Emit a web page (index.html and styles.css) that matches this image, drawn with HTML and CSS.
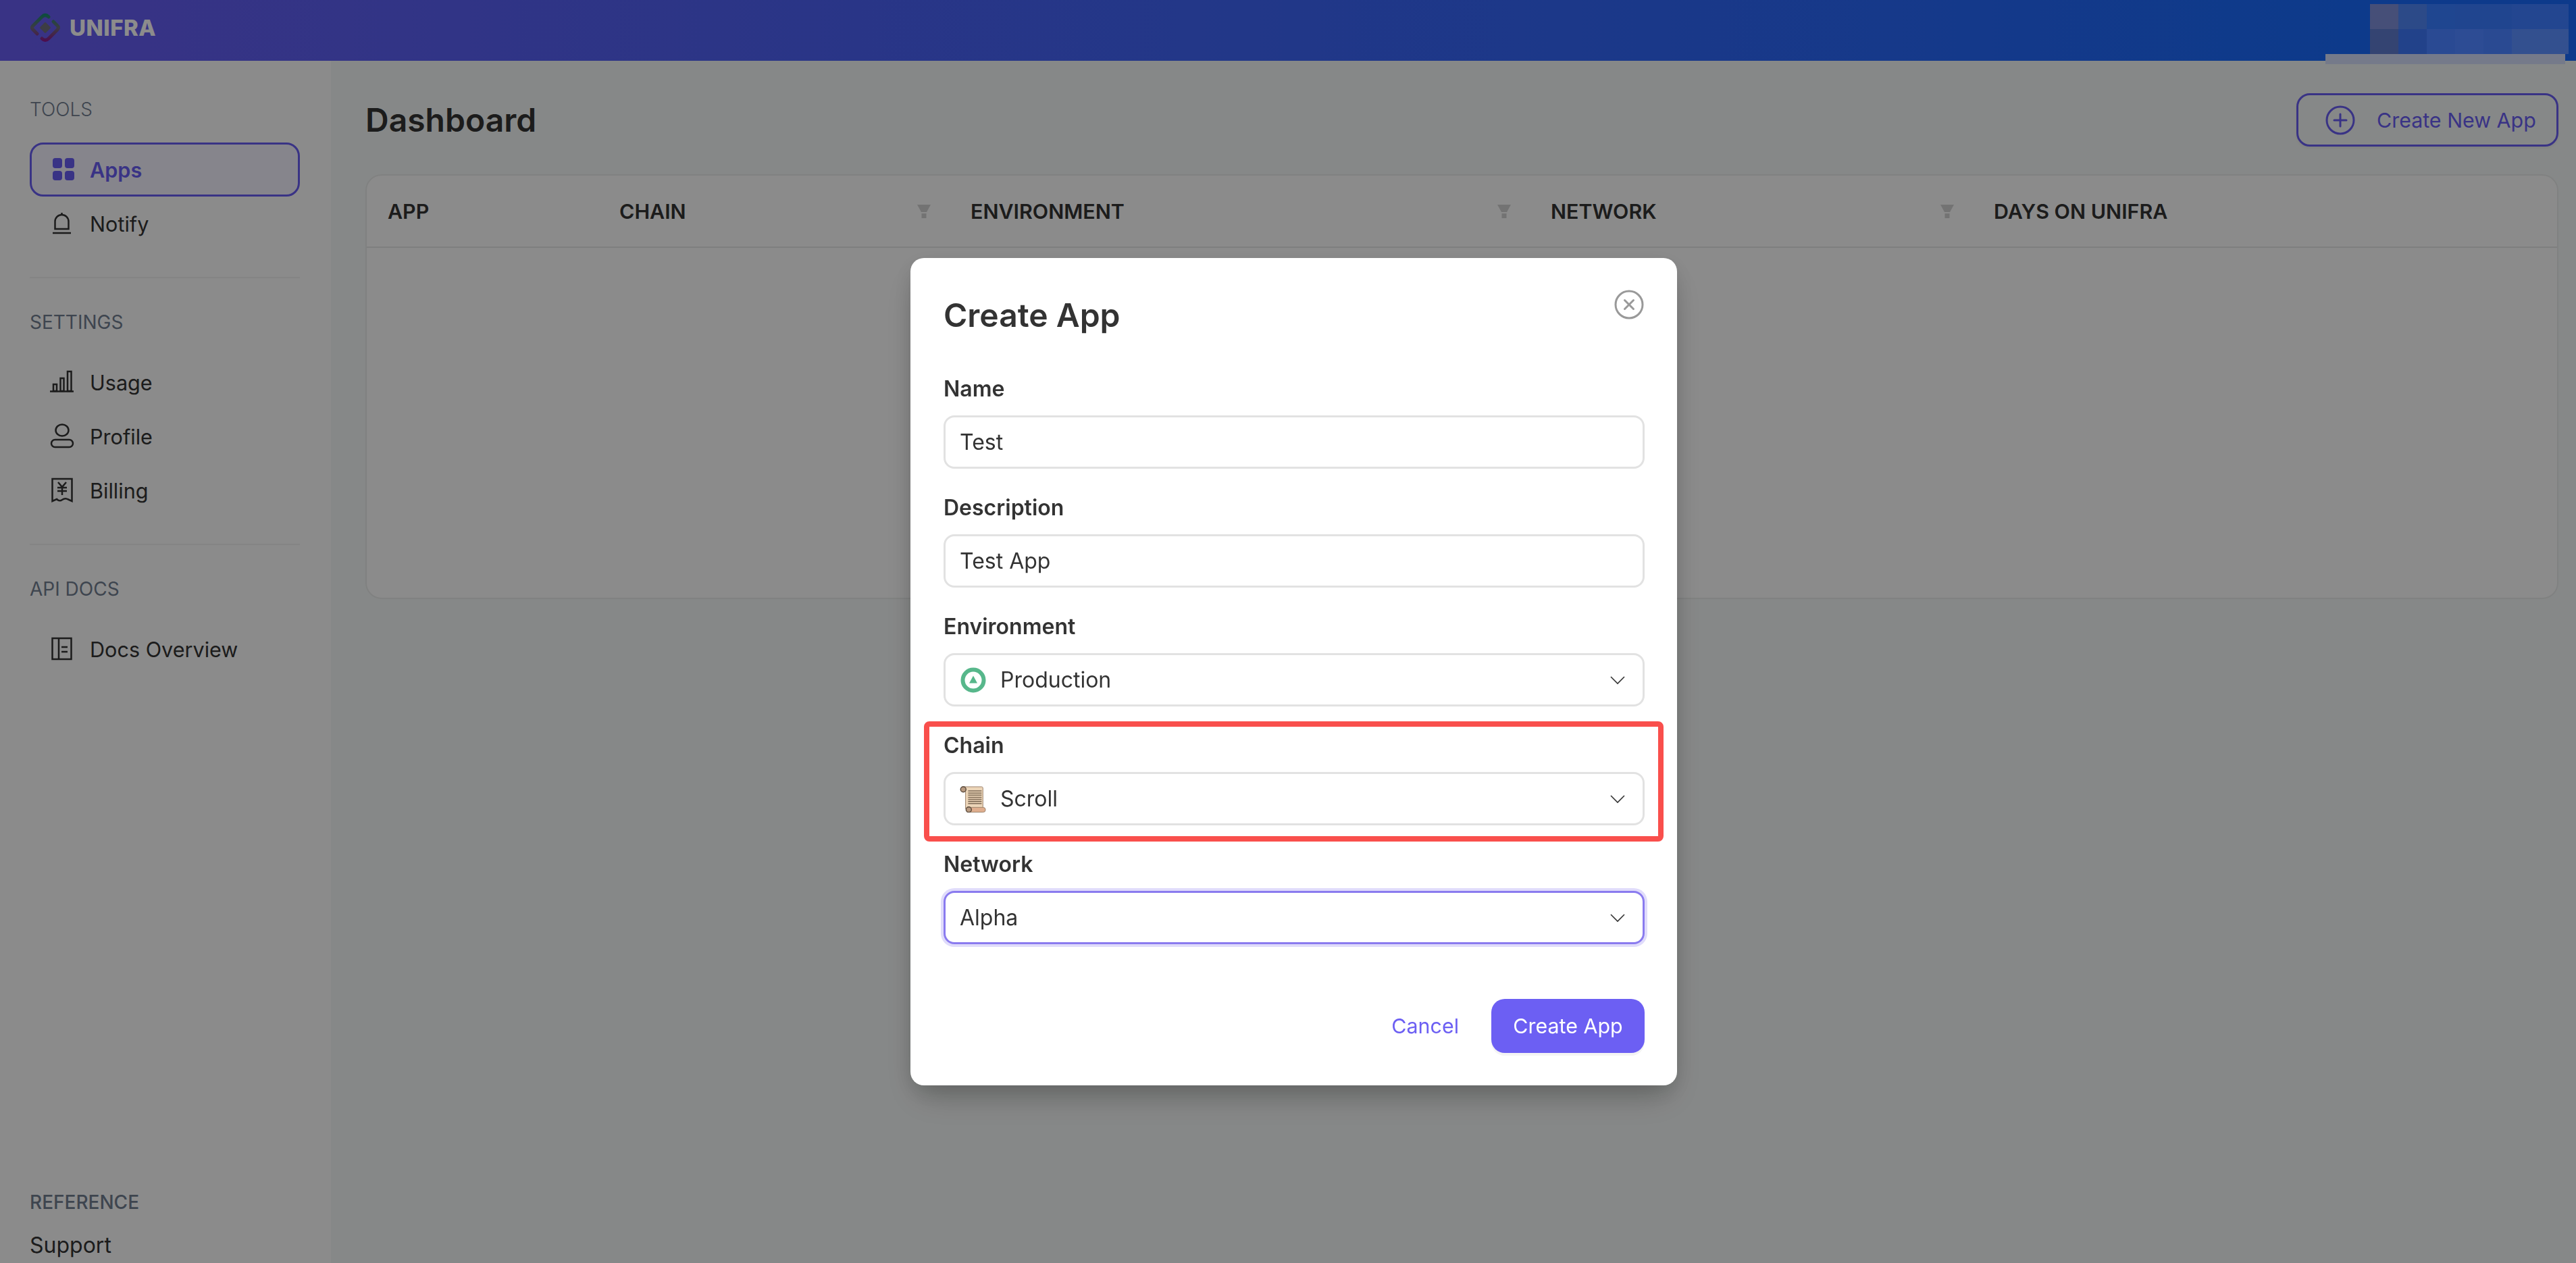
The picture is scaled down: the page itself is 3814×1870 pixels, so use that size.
FILE: index.html
```html
<!DOCTYPE html>
<html>
	<head>
		<meta charset="UTF-8">
		<title>Unifra Dashboard</title>
		<link rel="stylesheet" href="styles.css">
	</head>
	<body>
		<header class="topbar">
			<svg class="logo" viewBox="0 0 44 44" fill="none">
				<defs>
					<linearGradient id="logoFade" gradientUnits="userSpaceOnUse" x1="0" y1="0" x2="0" y2="44">
						<stop offset="0" stop-color="#0f8f6e"/>
						<stop offset="0.5" stop-color="#6d6d7c"/>
						<stop offset="1" stop-color="#8f0f90"/>
					</linearGradient>
				</defs>
				<path d="M27 6Q22 1 17 6L4 19Q1 22 4 25L10 31" stroke="url(#logoFade)" stroke-width="5" stroke-linecap="round"/>
				<path d="M17 38Q22 43 27 38L40 25Q43 22 40 19L34 13" stroke="url(#logoFade)" stroke-width="5" stroke-linecap="round"/>
				<path d="M22 15L29 22L22 29L15 22Z" fill="#6f6f7f" stroke="#6f6f7f" stroke-width="2" stroke-linejoin="round"/>
			</svg>
			<span class="brand">UNIFRA</span>
		</header>
		<div class="layout">
			<nav class="sidebar">
				<section class="nav-group nav-tools">
					<h3 class="nav-title nav-title-light">TOOLS</h3>
					<a class="nav-item active">
						<svg class="nav-icon" viewBox="0 0 40 40">
							<rect x="6" y="3" width="14" height="15" rx="4" fill="currentColor"/>
							<rect x="24" y="3" width="14" height="15" rx="4" fill="currentColor"/>
							<rect x="6" y="22" width="14" height="14" rx="4" fill="currentColor"/>
							<rect x="24" y="22" width="14" height="14" rx="4" fill="currentColor"/>
						</svg>
						Apps
					</a>
					<a class="nav-item">
						<svg class="nav-icon line" viewBox="0 0 40 40">
							<path d="M9.500 28V17a10 10 0 0 1 20 0V28Z"/>
							<path d="M19.500 7V4M6 34H33"/>
						</svg>
						Notify
					</a>
				</section>
				<section class="nav-group">
					<h3 class="nav-title">SETTINGS</h3>
					<a class="nav-item">
						<svg class="nav-icon line" viewBox="0 0 40 40">
							<path d="M2 33.500H37"/>
							<rect x="7" y="23" width="5" height="10"/>
							<rect x="17.500" y="14" width="5" height="19"/>
							<rect x="28" y="4" width="5.500" height="29"/>
						</svg>
						Usage
					</a>
					<a class="nav-item">
						<svg class="nav-icon line" viewBox="0 0 40 40">
							<ellipse cx="20" cy="11" rx="9.500" ry="8.500"/>
							<rect x="4" y="25" width="32" height="11" rx="5.500"/>
						</svg>
						Profile
					</a>
					<a class="nav-item">
						<svg class="nav-icon line" viewBox="0 0 40 40">
							<path d="M5.500 3H34.500V36L28 33Q24 31 20 34Q16 37 12 33L5.500 36Z"/>
							<path d="M14 8L20 15L26 8M13 16H27M13 21H27M20 15V27"/>
						</svg>
						Billing
					</a>
				</section>
				<section class="nav-group">
					<h3 class="nav-title">API DOCS</h3>
					<a class="nav-item">
						<svg class="nav-icon line" viewBox="0 0 40 40">
							<rect x="5.500" y="4" width="28" height="31"/>
							<path d="M15 4V35M19 17H28M19 24H28"/>
						</svg>
						Docs Overview
					</a>
				</section>
				<section class="nav-bottom">
					<h3 class="nav-title nav-title-strong">REFERENCE</h3>
					<a class="nav-link">Support</a>
				</section>
			</nav>
			<main class="content">
				<div class="content-head">
					<h1 class="page-title">Dashboard</h1>
					<button class="new-app">
						<svg class="new-app-icon" viewBox="0 0 44 44" fill="none" stroke="currentColor" stroke-width="3">
							<circle cx="22" cy="22" r="20"/>
							<path d="M22 13V31M13 22H31" stroke-linecap="round"/>
						</svg>
						Create New App
					</button>
				</div>
				<div class="apps-table">
					<div class="table-head">
						<div class="col col-app">APP</div>
						<div class="col col-chain">CHAIN
							<svg class="filter" viewBox="0 0 24 24"><path d="M2 2H22L16 13H8Z"/><rect x="8.500" y="15" width="7" height="7"/></svg>
						</div>
						<div class="col col-env">ENVIRONMENT
							<svg class="filter" viewBox="0 0 24 24"><path d="M2 2H22L16 13H8Z"/><rect x="8.500" y="15" width="7" height="7"/></svg>
						</div>
						<div class="col col-net">NETWORK
							<svg class="filter" viewBox="0 0 24 24"><path d="M2 2H22L16 13H8Z"/><rect x="8.500" y="15" width="7" height="7"/></svg>
						</div>
						<div class="col col-days">DAYS ON UNIFRA</div>
					</div>
				</div>
			</main>
		</div>
		<div class="overlay">
			<form class="modal">
				<svg class="close" viewBox="0 0 44 44" fill="none" stroke="#999" stroke-width="3">
					<circle cx="22" cy="22" r="20"/>
					<path d="M15.500 15.500L28.500 28.500M28.500 15.500L15.500 28.500" stroke-linecap="round"/>
				</svg>
				<h2 class="modal-title">Create App</h2>
				<div class="field">
					<label class="field-label">Name</label>
					<input class="control" type="text" value="Test">
				</div>
				<div class="field">
					<label class="field-label">Description</label>
					<input class="control" type="text" value="Test App">
				</div>
				<div class="field">
					<label class="field-label">Environment</label>
					<div class="control select">
						<svg class="opt-icon" viewBox="0 0 40 40">
							<circle cx="20" cy="20" r="15.500" fill="none" stroke="#57b78b" stroke-width="6"/>
							<path d="M20 13.500L26 24.500H14Z" fill="#57b78b"/>
						</svg>
						Production
						<svg class="chevron" viewBox="0 0 24 14"><path d="M2 2L12 12L22 2"/></svg>
					</div>
				</div>
				<div class="field field-marked">
					<label class="field-label">Chain</label>
					<div class="control select">
						<svg class="opt-icon" viewBox="0 0 40 42">
							<path d="M5 2H33Q35 2 35 4V36H8V6Z" fill="#ecd5b8" stroke="#9a8068" stroke-width="1"/>
							<circle cx="4.500" cy="6" r="4.200" fill="#b89a80" stroke="#5a4a3c" stroke-width="1.500"/>
							<path d="M12 8.500H33M12 11.800H33M12 15H33M12 18.300H33M12 21.500H33M12 24.800H33M12 28H33" stroke="#7d6a55" stroke-width="1.600"/>
							<rect x="10" y="34" width="29" height="7.500" rx="3.700" fill="#dfae8e" stroke="#9a8068" stroke-width="1"/>
							<circle cx="13" cy="37.500" r="4.200" fill="#b89a80" stroke="#5a4a3c" stroke-width="1.500"/>
						</svg>
						Scroll
						<svg class="chevron" viewBox="0 0 24 14"><path d="M2 2L12 12L22 2"/></svg>
					</div>
				</div>
				<div class="field">
					<label class="field-label">Network</label>
					<div class="control select focused">
						Alpha
						<svg class="chevron" viewBox="0 0 24 14"><path d="M2 2L12 12L22 2"/></svg>
					</div>
				</div>
				<div class="modal-actions">
					<a class="cancel">Cancel</a>
					<button class="submit" type="button">Create App</button>
				</div>
			</form>
		</div>
		<div class="mosaic">
			<div class="mosaic-grid">
				<i></i><i></i><i></i><i></i><i></i><i></i><i></i>
				<i></i><i></i><i></i><i></i><i></i><i></i><i></i>
			</div>
			<div class="mosaic-strip"></div>
		</div>
	</body>
</html>
```

FILE: styles.css
```css
* {
	box-sizing: border-box;
}
html, body {
	height: 100%;
}
body {
	margin: 0;
	overflow: hidden;
	background: #f5f8f7;
	color: #333;
	font-family: Inter, "Noto Sans", sans-serif;
	font-size: 32px;
}
h1, h2, h3 {
	margin: 0;
}

/* top bar */
.topbar {
	display: flex;
	align-items: center;
	height: 90px;
	padding: 0 0 8px 45px;
	background: linear-gradient(90deg, #695df2, #186bfd 92%);
}
.logo {
	width: 44px;
	height: 44px;
}
.brand {
	margin-left: 14px;
	color: #fff;
	font-size: 33px;
	font-weight: 800;
	letter-spacing: 0.5px;
}

.layout {
	display: flex;
	height: 1780px;
}

/* sidebar */
.sidebar {
	display: flex;
	flex-direction: column;
	width: 490px;
	padding: 0 46px 0 44px;
	background: #fdfdfd;
}
.nav-group {
	padding: 43px 0 39px;
	border-bottom: 2px solid #f0f0f0;
}
.nav-group:nth-child(3) {
	border-bottom: 0;
}
.nav-tools {
	padding-top: 50px;
}
.nav-title {
	height: 44px;
	margin-bottom: 27px;
	color: #727e91;
	font-size: 28px;
	font-weight: 400;
	line-height: 44px;
}
.nav-title-light {
	font-weight: 300;
}
.nav-title-strong {
	font-weight: 500;
	margin-bottom: 22px;
}
.nav-item {
	display: flex;
	align-items: center;
	gap: 21px;
	height: 80px;
	padding-left: 26px;
	border: 2px solid transparent;
	border-radius: 20px;
	font-size: 30.600px;
}
.nav-item.active {
	color: #695df2;
	font-weight: 600;
	background: #f5f2ff;
	border: 3px solid #695df2;
	padding-left: 25px;
}
.nav-icon {
	flex: none;
	width: 40px;
	height: 40px;
}
.line {
	fill: none;
	stroke: currentColor;
	stroke-width: 2.500;
}
.nav-bottom {
	margin-top: auto;
	padding-bottom: 6px;
}
.nav-link {
	display: block;
	line-height: 40px;
}

/* main */
.content {
	flex: 1;
	min-width: 0;
	padding: 48px 26px 0 51px;
}
.content-head {
	display: flex;
	align-items: center;
	justify-content: space-between;
	height: 79px;
	margin-bottom: 41px;
}
.page-title {
	font-size: 48px;
	font-weight: 600;
	color: #333;
}
.new-app {
	display: flex;
	align-items: center;
	width: 388px;
	height: 79px;
	padding: 0 0 0 40px;
	gap: 32px;
	background: transparent;
	border: 3px solid #695df2;
	border-radius: 20px;
	color: #695df2;
	font: 400 30.400px Inter, sans-serif;
	box-shadow: 0 2px 4px rgba(0, 0, 0, 0.06);
}
.new-app-icon {
	flex: none;
	width: 44px;
	height: 44px;
}
.apps-table {
	height: 629px;
	background: #fdfdfd;
	border: 2px solid #eaeceb;
	border-radius: 24px;
}
.table-head {
	display: flex;
	height: 107px;
	border-bottom: 2px solid #e6e8e7;
	font-size: 30.400px;
	font-weight: 600;
}
.col {
	display: flex;
	align-items: center;
	justify-content: space-between;
	padding-left: 32px;
	padding-right: 25px;
}
.col-app { width: 342px; padding-left: 31px; }
.col-chain { width: 520px; }
.col-env { width: 859px; }
.col-net { width: 656px; }
.col-days { flex: 1; }
.filter {
	width: 24px;
	height: 24px;
	fill: #d2d2d2;
}

/* dim layer + modal */
.overlay {
	position: fixed;
	inset: 0;
	background: rgba(0, 0, 0, 0.45);
}
.modal {
	position: absolute;
	left: 1348px;
	top: 382px;
	width: 1135px;
	height: 1225px;
	padding: 61px 48px 48px 49px;
	background: #fff;
	border-radius: 20px;
	box-shadow: 0 25px 50px -12px rgba(0, 0, 0, 0.25), 0 10px 30px rgba(0, 0, 0, 0.1);
}
.close {
	position: absolute;
	top: 47px;
	right: 49px;
	width: 44px;
	height: 44px;
}
.modal-title {
	height: 48px;
	margin-bottom: 65px;
	font-size: 48px;
	font-weight: 600;
	line-height: 48px;
}
.field {
	position: relative;
	margin-bottom: 38px;
}
.field-label {
	display: block;
	height: 40px;
	margin-bottom: 19px;
	font-weight: 600;
	line-height: 40px;
}
.control {
	display: flex;
	align-items: center;
	width: 100%;
	height: 79px;
	padding: 0 21px;
	background: #fff;
	border: 3px solid #e2e2e2;
	border-radius: 16px;
	color: #333;
	font: 400 32px Inter, sans-serif;
}
.opt-icon {
	flex: none;
	width: 40px;
	height: 40px;
	margin-right: 20px;
}
.chevron {
	width: 24px;
	height: 14px;
	margin-left: auto;
	margin-right: 4px;
	fill: none;
	stroke: #333;
	stroke-width: 1.600;
}
.focused {
	border-color: #8a7bef;
	box-shadow: 0 0 0 4px #e0dcfb;
}
.field-marked::after {
	content: "";
	position: absolute;
	top: -16px;
	right: -28px;
	bottom: -24px;
	left: -29px;
	border: 8px solid #f94f4c;
	border-radius: 8px;
}
.modal-actions {
	display: flex;
	align-items: center;
	justify-content: flex-end;
	gap: 48px;
	margin-top: 81px;
}
.cancel {
	color: #6c5ff3;
	font-size: 30.400px;
	font-weight: 400;
}
.submit {
	width: 227px;
	height: 80px;
	padding: 0;
	background: #6c5ff3;
	border: 0;
	border-radius: 20px;
	color: #fff;
	font: 400 30.400px Inter, sans-serif;
	box-shadow: 0 4px 0 #f4f4f4;
}

/* blurred-out account corner */
.mosaic {
	position: fixed;
	top: 6px;
	left: 3443px;
	width: 360px;
}
.mosaic-grid {
	display: grid;
	grid-template-columns: repeat(7, 42px);
	grid-auto-rows: 37px;
	margin-left: 66px;
}
.mosaic-grid i:nth-child(1) { background: #464f78; }
.mosaic-grid i:nth-child(2) { background: #2c4a88; }
.mosaic-grid i:nth-child(3) { background: #1f4690; }
.mosaic-grid i:nth-child(4) { background: #20458f; }
.mosaic-grid i:nth-child(5) { background: #20458f; }
.mosaic-grid i:nth-child(6) { background: #234690; }
.mosaic-grid i:nth-child(7) { background: #234690; }
.mosaic-grid i:nth-child(8) { background: #344472; }
.mosaic-grid i:nth-child(9) { background: #22428a; }
.mosaic-grid i:nth-child(10) { background: #2a4a93; }
.mosaic-grid i:nth-child(11) { background: #2d4c94; }
.mosaic-grid i:nth-child(12) { background: #2a4a92; }
.mosaic-grid i:nth-child(13) { background: #33508f; }
.mosaic-grid i:nth-child(14) { background: #33508f; }
.mosaic-strip {
	width: 355px;
	height: 15px;
	background: #757a8a;
}
```
